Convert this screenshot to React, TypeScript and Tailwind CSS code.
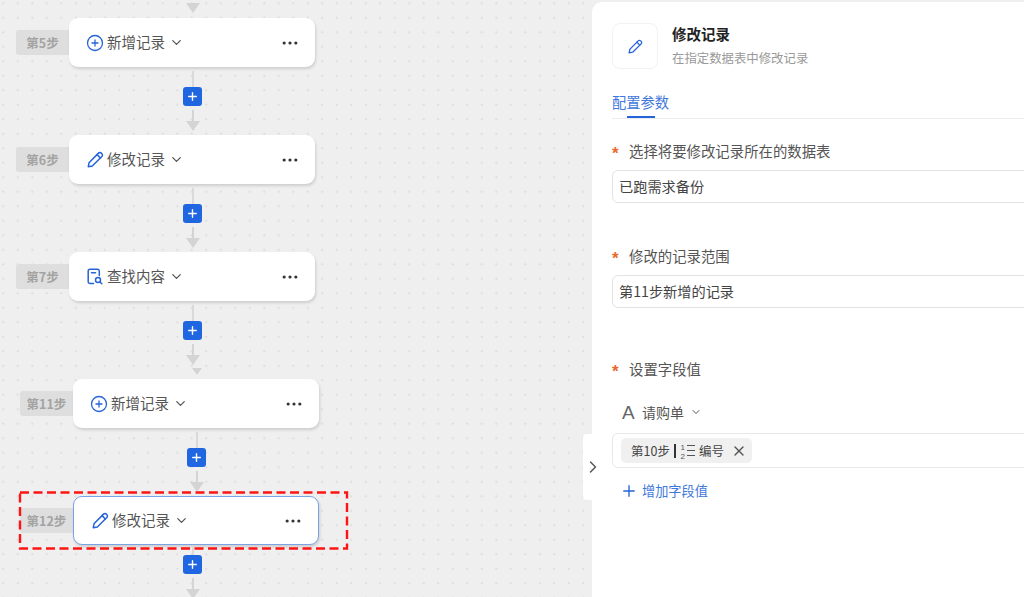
import { ChevronDown, ChevronRight, CirclePlus, Ellipsis, Plus, X } from "lucide-react";
import type { ReactNode } from "react";

const font = "font-['Noto_Sans_CJK_SC','Liberation_Sans',sans-serif]";
const blue = "#2563d9";

function PenIcon({ size = 17 }: { size?: number }) {
  return (
    <svg width={size} height={size} viewBox="0 0 16 16" fill="none" stroke={blue} strokeWidth="1.4" strokeLinejoin="round" strokeLinecap="round">
      <path d="M1.200 14.800l.7-3.700L10.800 2a1.900 1.900 0 0 1 2.700 0l.5.500a1.900 1.900 0 0 1 0 2.700L5 14.100z" />
      <path d="M9.500 3.400l3.100 3.100" />
    </svg>
  );
}

function FindIcon() {
  return (
    <svg width="16" height="17" viewBox="0 0 16 17" fill="none" stroke={blue} strokeWidth="1.5" strokeLinecap="round" strokeLinejoin="round">
      <path d="M6.500 15.500H3a1.800 1.800 0 0 1-1.800-1.800V3A1.800 1.800 0 0 1 3 1.200h7.500A1.800 1.800 0 0 1 12.300 3v4.500" />
      <path d="M4.500 4.800h4" />
      <circle cx="11" cy="12" r="2.500" />
      <path d="M13 14l1.800 1.800" />
    </svg>
  );
}

function NumberListIcon() {
  return (
    <svg width="15" height="17" viewBox="0 0 15 17" fill="none" stroke="#555" strokeWidth="1.2">
      <path d="M7 3.500h8M7 8.500h8M7 13.500h8" />
      <text x="0.500" y="7.500" fontSize="8" fontFamily="Liberation Sans" fill="#555" stroke="none">1</text>
      <text x="0.500" y="16.500" fontSize="8" fontFamily="Liberation Sans" fill="#555" stroke="none">2</text>
    </svg>
  );
}

function Arrow({ small }: { small?: boolean }) {
  return (
    <div
      className={
        small
          ? "h-0 w-0 border-x-[5px] border-t-[7px] border-x-transparent border-t-[#d4d4d4]"
          : "h-0 w-0 border-x-[7px] border-t-[10px] border-x-transparent border-t-[#d4d4d4]"
      }
    />
  );
}

function Connector({ className, short }: { className: string; short?: boolean }) {
  return (
    <div className={`absolute flex w-[19px] flex-col items-center ${className}`}>
      <div className={short ? "h-[8px] w-[2px] bg-[#d9d9d9]" : "h-[16px] w-[2px] bg-[#d9d9d9]"} />
      <div className="flex h-[19px] w-[19px] items-center justify-center rounded-[3px] bg-[#1f66e0]">
        <Plus size={13} strokeWidth={2.6} color="#fff" />
      </div>
      <div className="mt-[4px] h-[11px] w-[2px] bg-[#d4d4d4]" />
      <Arrow />
    </div>
  );
}

function StepNode({
  className,
  step,
  icon,
  title,
  selected,
}: {
  className: string;
  step: string;
  icon: ReactNode;
  title: string;
  selected?: boolean;
}) {
  return (
    <div className={`absolute flex items-center ${className}`}>
      <div className="flex h-[25px] w-[53px] items-center justify-center rounded-l-[3px] bg-[#dedede] pt-[1px] text-[12.500px] font-bold text-[#a3a3a3]">
        {step}
      </div>
      <div
        className={`flex h-[49px] w-[246px] items-center rounded-[9px] bg-white pl-[18px] pr-[15px] shadow-[1px_2px_3px_rgba(0,0,0,0.14)] ${
          selected ? "border border-[#7aa3e5]" : ""
        }`}
      >
        <span className="flex w-[20px] justify-start">{icon}</span>
        <span className="pb-[2px] text-[14.500px] leading-[20px] text-[#555]">{title}</span>
        <ChevronDown size={15} color="#555" className="ml-[4px]" />
        <Ellipsis size={20} color="#333" strokeWidth={1.8} className="ml-auto" />
      </div>
    </div>
  );
}

function FieldLabel({ children, className }: { children: ReactNode; className?: string }) {
  return (
    <div className={`flex h-[20px] items-center ${className ?? ""}`}>
      <span className="w-[17px] pt-[5px] font-['Liberation_Sans',sans-serif] text-[17px] font-bold leading-none text-[#e8692c]">*</span>
      <span className="text-[14.400px] text-[#555]">{children}</span>
    </div>
  );
}

function TextBox({ children, className }: { children: ReactNode; className?: string }) {
  return (
    <div className={`flex h-[33px] w-[500px] items-center rounded-[6px] border border-[#e2e2e2] pl-[6px] text-[14.200px] text-[#444] ${className ?? ""}`}>
      {children}
    </div>
  );
}

export default function App() {
  return (
    <div className={`flex h-[597px] w-[1024px] overflow-hidden bg-[#efefef] ${font}`}>
      {/* flow canvas */}
      <div className="relative h-full w-[592px] bg-[radial-gradient(#dbdbdb_0.9px,transparent_1.100px)] bg-[size:14.500px_14.500px] bg-[position:-4px_-4px]">
        <div className="absolute left-[186px] top-[3px]"><Arrow /></div>

        <StepNode className="left-[16px] top-[18px]" step="第5步" title="新增记录" icon={<CirclePlus size={18} color={blue} strokeWidth={1.7} className="-ml-[1px]" />} />
        <Connector className="left-[183px] top-[71px]" />
        <StepNode className="left-[16px] top-[135px]" step="第6步" title="修改记录" icon={<PenIcon />} />
        <Connector className="left-[183px] top-[188px]" />
        <StepNode className="left-[16px] top-[252px]" step="第7步" title="查找内容" icon={<FindIcon />} />
        <Connector className="left-[183px] top-[305px]" />
        <div className="absolute left-[192px] top-[368px]"><Arrow small /></div>
        <StepNode className="left-[20px] top-[379px]" step="第11步" title="新增记录" icon={<CirclePlus size={18} color={blue} strokeWidth={1.7} className="-ml-[1px]" />} />
        <Connector className="left-[187px] top-[432px]" />
        <StepNode className="left-[20px] top-[496px]" step="第12步" title="修改记录" selected icon={<PenIcon />} />
        <Connector className="left-[183px] top-[547px]" short />

        {/* annotation box */}
        <svg className="absolute left-[18px] top-[490px]" width="331" height="60" fill="none">
          <rect x="2" y="2.500" width="327" height="56" stroke="#ff1414" strokeWidth="2.400" strokeDasharray="9 4.500" />
        </svg>

        {/* panel toggle */}
        <div className="absolute left-[583px] top-[434px] flex h-[66px] w-[9px] items-center rounded-l-[4px] bg-white">
          <ChevronRight size={20} color="#555" strokeWidth={1.7} className="shrink-0" />
        </div>
      </div>

      {/* settings panel */}
      <div className="mt-[2px] flex w-[432px] flex-col rounded-tl-[10px] bg-white pl-[20px]">
        <div className="mt-[21px] flex">
          <div className="flex h-[46px] w-[46px] items-center justify-center rounded-[8px] border border-[#f2f2f2]">
            <PenIcon size={15} />
          </div>
          <div className="ml-[14px] flex flex-col">
            <span className="text-[14.500px] font-bold leading-[22px] text-[#222]">修改记录</span>
            <span className="mt-[3px] text-[12.400px] leading-[20px] text-[#999]">在指定数据表中修改记录</span>
          </div>
        </div>

        <div className="mt-[16px] h-[34px] border-b border-[#ececec]">
          <div className="flex w-[57px] flex-col items-center">
            <span className="pt-[8px] text-[14.250px] leading-[18px] text-[#3f78dc]">配置参数</span>
            <div className="mt-[5px] h-[2px] w-[28px] bg-[#2563d9]" />
          </div>
        </div>

        <FieldLabel className="mt-[22px]">选择将要修改记录所在的数据表</FieldLabel>
        <TextBox className="mt-[9px]">已跑需求备份</TextBox>

        <FieldLabel className="mt-[43px]">修改的记录范围</FieldLabel>
        <TextBox className="mt-[9px]">第11步新增的记录</TextBox>

        <FieldLabel className="mt-[51px]">设置字段值</FieldLabel>

        <div className="ml-[10px] mt-[23px] flex h-[20px] items-center text-[14px] text-[#555]">
          <span className="w-[20px] font-['Liberation_Sans',sans-serif] text-[19px] leading-none text-[#666]">A</span>
          <span>请购单</span>
          <ChevronDown size={12} color="#555" className="ml-[6px]" />
        </div>

        <div className="mt-[11px] flex h-[35px] w-[500px] items-center rounded-[6px] border border-[#e8e8e8] pl-[8px]">
          <div className="flex h-[25px] items-center rounded-[5px] bg-[#f0f0f0] pl-[10px] pr-[5px] text-[12.500px] text-[#444]">
            <span className="pt-[1px]">第10步</span>
            <span className="ml-[4px] mr-[4px] h-[14px] w-[2px] bg-[#333]" />
            <NumberListIcon />
            <span className="ml-[4px] pt-[1px]">编号</span>
            <X size={16} color="#555" className="ml-[7px]" />
          </div>
        </div>

        <div className="ml-[8px] mt-[13px] flex h-[20px] items-center text-[13.200px] text-[#3f78dc]">
          <Plus size={18} color={blue} strokeWidth={1.8} className="mr-[4px]" />
          增加字段值
        </div>
      </div>
    </div>
  );
}
